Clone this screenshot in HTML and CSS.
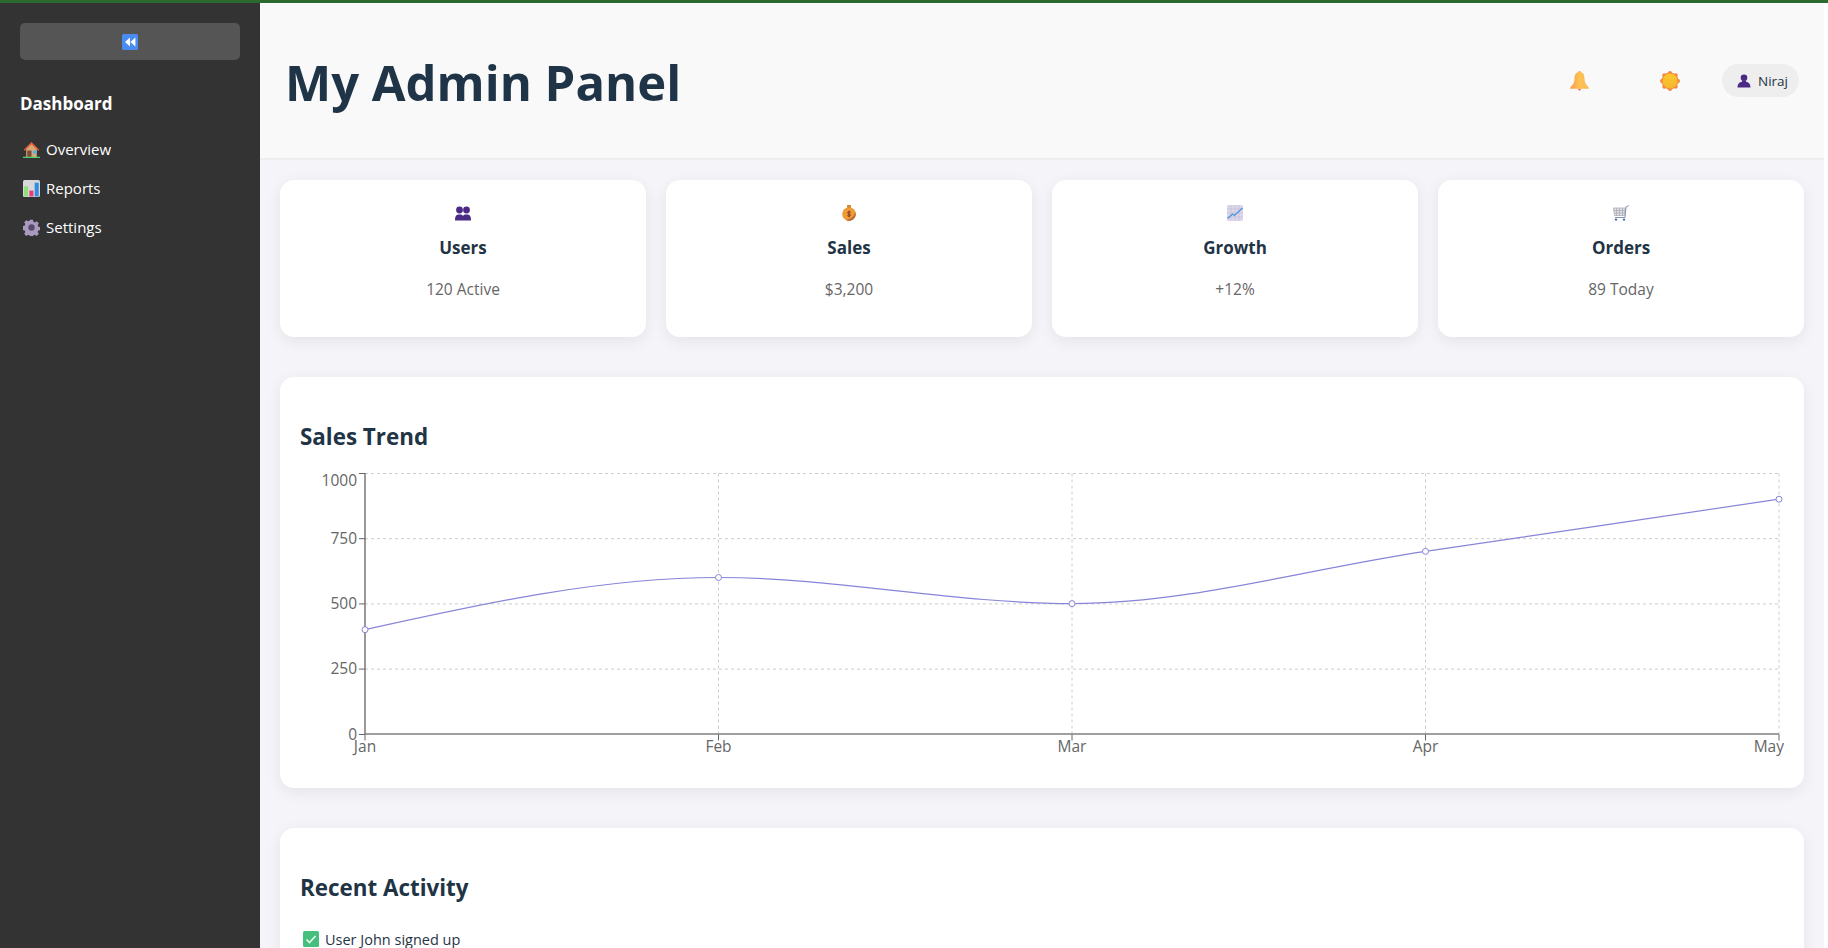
FILE: index.html
```html
<!DOCTYPE html>
<html lang="en">
<head>
<meta charset="utf-8">
<title>My Admin Panel</title>
<link rel="stylesheet" href="styles.css">
</head>
<body>
<div class="topline"></div>
<div class="app">
  <aside class="sidebar">
    <button class="collapse" type="button" aria-label="Collapse">
      <svg class="ico" viewBox="0 0 16 16"><rect width="16" height="16" rx="1.5" fill="#4a8df0"/><path d="M8 3.6v8.8L3 8zM13.4 3.6v8.8L8.4 8z" fill="#fff"/></svg>
    </button>
    <h2 class="brand">Dashboard</h2>
    <nav class="nav">
      <a class="nav-item">
        <svg class="ico nav-ico" viewBox="0 0 16 16"><path d="M3 6.500L8 2.500l5 4v8.500H3z" fill="#d9a878"/><path d="M8 1L.7 8.200l1 1L8 3.200l6.300 6 1-1z" fill="#e2603a"/><rect x="4" y="9" width="4" height="6" fill="#7a4a35"/><rect x="9.500" y="9" width="3.200" height="3" fill="#4fb4ea"/><rect y="14.800" width="16" height="1.200" fill="#4fcf6e"/></svg>
        <span>Overview</span>
      </a>
      <a class="nav-item">
        <svg class="ico nav-ico" viewBox="0 0 16 16"><rect width="16" height="16" rx="1.500" fill="#d9d6dc"/><rect x="1" y="6" width="3.800" height="9.500" fill="#8fe07a"/><rect x="6" y="10" width="3.800" height="5.500" fill="#ee3a78"/><rect x="11" y="2.500" width="3.800" height="13" fill="#2f8fe0"/></svg>
        <span>Reports</span>
      </a>
      <a class="nav-item">
        <svg class="ico nav-ico" viewBox="0 0 16 16"><path d="M6.600.6h2.800l.4 2 1.400.6 1.700-1.100 2 2-1.100 1.700.6 1.400 2 .4v2.800l-2 .4-.6 1.400 1.100 1.700-2 2-1.700-1.100-1.400.6-.4 2H6.600l-.4-2-1.400-.6-1.700 1.100-2-2 1.100-1.700-.6-1.400-2-.4V6.600l2-.4.6-1.400-1.100-1.700 2-2 1.700 1.100 1.400-.6z" fill="#a99bc0"/><circle cx="8" cy="8" r="3" fill="#5a4a6a"/></svg>
        <span>Settings</span>
      </a>
    </nav>
  </aside>
  <main class="main">
    <header class="header">
      <h1 class="title">My Admin Panel</h1>
      <div class="actions">
        <svg class="ico-lg bell" viewBox="0 0 20 20"><defs><linearGradient id="bellg" x1="0" y1="0" x2="1" y2="0"><stop offset="0" stop-color="#f79b4c"/><stop offset=".5" stop-color="#fdc255"/><stop offset="1" stop-color="#fdb94c"/></linearGradient></defs><circle cx="9.500" cy="1.500" r="1.500" fill="#f6a552"/><path d="M9.500 1C6 1 4.500 3.800 4.500 7.500c0 4-1.500 6.500-4.300 9v1.300h18.600v-1.300c-2.800-2.500-4.300-5-4.300-9C14.500 3.800 13 1 9.500 1z" fill="url(#bellg)"/><path d="M7.500 17.800h4L9.500 20z" fill="#f2784b"/></svg>
        <svg class="ico-lg sun" viewBox="0 0 20 20"><defs><linearGradient id="sung" x1="0" y1="0" x2="0" y2="1"><stop offset="0" stop-color="#fdc830"/><stop offset="1" stop-color="#f5b62e"/></linearGradient></defs><g fill="#f5863c"><circle cx="10" cy="2" r="2"/><circle cx="10" cy="18" r="2"/><circle cx="2" cy="10" r="2"/><circle cx="18" cy="10" r="2"/><circle cx="4.300" cy="4.300" r="2"/><circle cx="15.700" cy="4.300" r="2"/><circle cx="4.300" cy="15.700" r="2"/><circle cx="15.700" cy="15.700" r="2"/><circle cx="10" cy="10" r="8.500"/></g><circle cx="10" cy="10" r="7.600" fill="url(#sung)"/></svg>
        <div class="user">
          <svg class="ico-sm" viewBox="0 0 14 14"><circle cx="7" cy="3.800" r="3.300" fill="#4b2a85"/><path d="M5 6.500h4v1.300c2.500.6 4.300 1.700 4.500 5.700H.5c.2-4 2-5.100 4.500-5.700z" fill="#4b2a85"/></svg>
          <span>Niraj</span>
        </div>
      </div>
    </header>
    <div class="content">
      <section class="stats">
        <article class="stat">
          <svg class="ico" viewBox="0 0 16 16"><circle cx="4.500" cy="5" r="3.400" fill="#4b2a85"/><circle cx="11.500" cy="5" r="3.400" fill="#4b2a85"/><path d="M0 15.500c0-3.500.5-5 3-6h3c1.300.4 2 1.200 2 2.200 0-1 .7-1.800 2-2.200h3c2.500 1 3 2.500 3 6z" fill="#4b2a85"/></svg>
          <h3>Users</h3>
          <p>120 Active</p>
        </article>
        <article class="stat">
          <svg class="ico" viewBox="0 0 16 16"><rect x="6" y="0" width="4" height="2.500" fill="#d98a2c"/><rect x="6.500" y="2.300" width="3" height="1.200" fill="#7a4a28"/><circle cx="8" cy="9" r="6.800" fill="#ee9a35"/><path d="M8 15.800c3.700 0 6.800-3 6.800-6.800 0-1-.2-1.800-.5-2.600-.5 4-3.500 7.600-9.300 8.500 1 .6 2 .9 3 .9z" fill="#b86b3a"/><path d="M9.800 7.300C9.500 6.500 6.800 6.400 6.600 7.700c-.2 1.500 3 1 2.900 2.600-.1 1.200-2.700 1.100-3.100.2M8 5.800v6.300" fill="none" stroke="#7c3a28" stroke-width="1"/></svg>
          <h3>Sales</h3>
          <p>$3,200</p>
        </article>
        <article class="stat">
          <svg class="ico" viewBox="0 0 16 16"><rect width="16" height="16" rx="1" fill="#dcd7ea"/><path d="M0 4h16M0 8h16M0 12h16M4 0v16M8 0v16M12 0v16" stroke="#c2b9d6" stroke-width=".6"/><path d="M.5 13.500l5-4.500 2 1.500L15.500 3" fill="none" stroke="#4a94e0" stroke-width="1.300"/></svg>
          <h3>Growth</h3>
          <p>+12%</p>
        </article>
        <article class="stat">
          <svg class="ico" viewBox="0 0 16 16"><path d="M.5 3h12l-1 7.500H1.500z" fill="#e2e2e8"/><path d="M.5 5.500h12M1 8h11M3.500 3v7.500M6.500 3v7.500M9.500 3v7.500" stroke="#a5a5ad" stroke-width=".7"/><path d="M.5 3h12l-1 7.500H1.500z" fill="none" stroke="#a5a5ad" stroke-width=".7"/><path d="M15.800.5L13 2l-1 10.500H2" fill="none" stroke="#8090b8" stroke-width="1"/><circle cx="3" cy="14.600" r="1.200" fill="#4a6fb5"/><circle cx="11" cy="14.600" r="1.200" fill="#4a6fb5"/></svg>
          <h3>Orders</h3>
          <p>89 Today</p>
        </article>
      </section>

      <section class="panel chart-panel">
        <h2 class="panel-title">Sales Trend</h2>
        <svg class="chart" viewBox="0 0 1484 290" aria-label="Sales trend line chart">
          <g class="grid">
            <path d="M65 7.500H1479M65 72.700H1479M65 137.900H1479M65 203.100H1479"/>
            <path d="M418.500 7.500V268.500M772 7.500V268.500M1125.500 7.500V268.500M1479 7.500V268.500"/>
          </g>
          <g class="axis">
            <path class="axis-line" d="M65 7V268M65 268H1479"/>
            <path d="M59 7.500h6M59 72.700h6M59 137.900h6M59 203.100h6M59 268.500h6M65 268.500v6M418.500 268.500v6M772 268.500v6M1125.500 268.500v6M1479 268.500v6"/>
          </g>
          <path class="line" d="M65 163.700C182.800 137.600 300.700 111.500 418.500 111.500C536.300 111.500 654.200 137.600 772 137.600C889.800 137.600 1007.700 102.800 1125.500 85.400C1243.300 68 1361.200 50.600 1479 33.200"/>
          <g class="dots">
            <circle cx="65" cy="163.700" r="3"/><circle cx="418.500" cy="111.500" r="3"/><circle cx="772" cy="137.600" r="3"/><circle cx="1125.500" cy="85.400" r="3"/><circle cx="1479" cy="33.200" r="3"/>
          </g>
          <g class="ylabels">
            <text x="57" y="20">1000</text><text x="57" y="78">750</text><text x="57" y="143">500</text><text x="57" y="208">250</text><text x="57" y="274">0</text>
          </g>
          <g class="xlabels">
            <text x="65" y="286">Jan</text><text x="418.500" y="286">Feb</text><text x="772" y="286">Mar</text><text x="1125.500" y="286">Apr</text><text class="last" x="1484" y="286">May</text>
          </g>
        </svg>
      </section>

      <section class="panel activity-panel">
        <h2 class="panel-title">Recent Activity</h2>
        <ul class="activity">
          <li>
            <svg class="ico" viewBox="0 0 16 16"><rect width="16" height="16" rx="1.500" fill="#45c07c"/><path d="M3.500 8.500l3 3 6-6.500" fill="none" stroke="#e8fbf0" stroke-width="1.600"/></svg>
            <span>User John signed up</span>
          </li>
        </ul>
      </section>
    </div>
  </main>
</div>
</body>
</html>
```
FILE: styles.css
```css
* { box-sizing: border-box; }
html, body { height: 100%; }
body {
  margin: 0;
  overflow: hidden;
  display: flex;
  flex-direction: column;
  background: #fff;
  font-family: "Open Sans", "Noto Sans", sans-serif;
  color: #1f3445;
}
.topline { height: 3px; flex: none; background: #2b6a2e; }
.app { flex: 1; display: flex; min-height: 0; padding-right: 4px; }
.ico { width: 16px; height: 16px; flex: none; display: block; }
.ico-lg { width: 20px; height: 20px; flex: none; display: block; }
.ico-sm { width: 14px; height: 14px; flex: none; display: block; }
.nav-ico { width: 17px; height: 17px; }

.sidebar {
  width: 260px;
  flex: none;
  background: #333;
  color: #fff;
  padding: 20px;
}
.collapse {
  width: 100%;
  height: 37px;
  padding: 0;
  border: 0;
  border-radius: 5px;
  background: #555;
  display: flex;
  align-items: center;
  justify-content: center;
}
.brand { margin: 31px 0 0; font-size: 17px; line-height: 26px; font-weight: 700; }
.nav { margin-top: 18px; display: flex; flex-direction: column; gap: 11px; }
.nav-item {
  display: flex;
  align-items: center;
  gap: 6px;
  height: 28px;
  padding-left: 3px;
  font-size: 15px;
  color: #fff;
}

.main { flex: 1; min-width: 0; overflow: hidden; background: #f4f4f9; }
.header {
  height: 157px;
  padding: 0 25px 0 25px;
  display: flex;
  align-items: center;
  justify-content: space-between;
  background: #f9f9f9;
  border-bottom: 2px solid #eee;
}
.title { margin: 4px 0 0; font-size: 49px; line-height: 1.2; font-weight: 700; color: #1f3547; }
.actions { display: flex; align-items: center; }
.bell { margin-right: 70px; }
.sun { margin-right: 42px; }
.user {
  display: flex;
  align-items: center;
  gap: 7px;
  height: 33px;
  padding: 0 11px 0 15px;
  border-radius: 17px;
  background: #eee;
  font-size: 13.5px;
  color: #1f3445;
}

.content { padding: 20px; }
.stats { display: grid; grid-template-columns: repeat(4, 1fr); gap: 20px; }
.stat {
  height: 157px;
  padding-top: 25px;
  display: flex;
  flex-direction: column;
  align-items: center;
  background: #fff;
  border-radius: 14px;
  box-shadow: 0 4px 15px rgba(0, 0, 0, .07);
}
.stat h3 { margin: 14px 0 0; font-size: 17px; line-height: 26px; font-weight: 700; }
.stat p { margin: 16px 0 0; font-size: 15.5px; line-height: 24px; color: #666; }

.panel {
  margin-top: 40px;
  padding: 20px;
  background: #fff;
  border-radius: 14px;
  box-shadow: 0 4px 15px rgba(0, 0, 0, .07);
}
.chart-panel { height: 411px; }
.panel-title { margin: 25px 0 0; font-size: 22.4px; line-height: 30px; font-weight: 700; }
.chart { display: block; width: 1484px; height: 290px; margin-top: 14px; }
.grid path { fill: none; stroke: #ccc; stroke-dasharray: 3 3; }
.axis path { fill: none; stroke: #666; }
.axis .axis-line { stroke: #808080; stroke-width: 1.6; }
.line { fill: none; stroke: #8884d8; stroke-width: 1.2; }
.dots circle { fill: #fff; stroke: #8884d8; stroke-width: 1; }
.chart text { font-size: 15.5px; fill: #666; font-family: "Open Sans", "Noto Sans", sans-serif; }
.ylabels text { text-anchor: end; }
.xlabels text { text-anchor: middle; }
.xlabels .last { text-anchor: end; }

.activity { list-style: none; margin: 24px 0 0; padding: 0 0 0 3px; }
.activity li { display: flex; align-items: center; gap: 6px; height: 24px; font-size: 14.5px; }
```
